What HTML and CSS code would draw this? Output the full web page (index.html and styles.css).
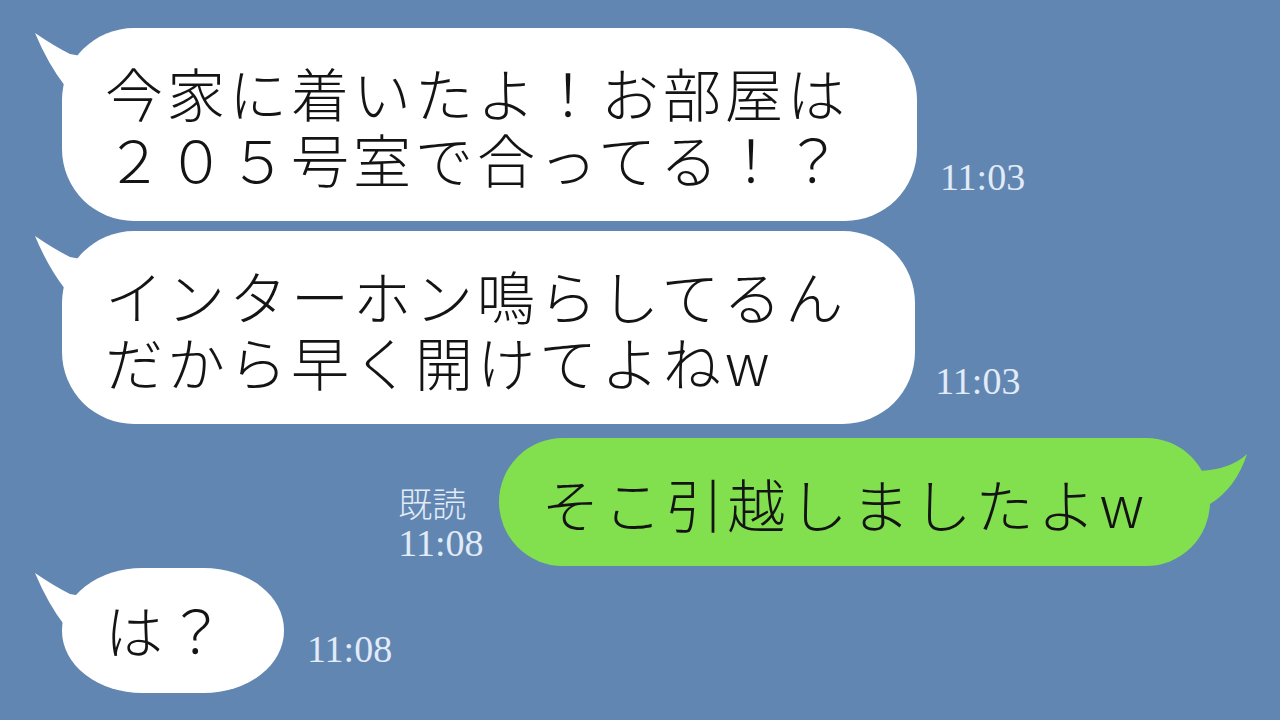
FILE: index.html
```html
<!DOCTYPE html>
<html lang="ja">
<head>
  <meta charset="UTF-8" />
  <meta name="viewport" content="width=device-width, initial-scale=1.0"/>
  <title>トーク</title>
  <link rel="stylesheet" href="styles.css">
</head>
<body>
  <div id="chat">
    <div class="row row-first">
      <div class="bubble in">
        <svg class="tail" viewBox="-30 0 45 65"><path d="M-27,5 Q-8,18 8,26 L30,30 L30,58 L3,58 Q-14,36 -27,5 Z"/></svg>
        <p>今家に着いたよ！お部屋は<br>２０５号室で合ってる！？</p>
      </div>
      <div class="time">11:03</div>
    </div>

    <div class="row row-second">
      <div class="bubble in">
        <svg class="tail" viewBox="-30 0 45 65"><path d="M-27,5 Q-8,18 8,26 L30,30 L30,58 L3,58 Q-14,36 -27,5 Z"/></svg>
        <p>インターホン鳴らしてるん<br>だから早く開けてよねw</p>
      </div>
      <div class="time">11:03</div>
    </div>

    <div class="row row-mine">
      <div class="status">
        <div class="read">既読</div>
        <div class="time">11:08</div>
      </div>
      <div class="bubble out">
        <svg class="tail" viewBox="-25 0 65 70"><path d="M37,16 Q20,32 -12,33 L-20,50 L0,66 Q26,50 37,16 Z"/></svg>
        <p>そこ引越しましたよw</p>
      </div>
    </div>

    <div class="row row-last">
      <div class="bubble in short">
        <svg class="tail" viewBox="-30 0 45 65"><path d="M-27,5 Q-8,18 8,26 L30,30 L30,58 L3,58 Q-14,36 -27,5 Z"/></svg>
        <p>は？</p>
      </div>
      <div class="time">11:08</div>
    </div>
  </div>
</body>
</html>
```

FILE: styles.css
```css
body {
  margin: 0;
  width: 1280px;
  height: 720px;
  overflow: hidden;
  background: #6186b1;
  font-family: "Noto Sans CJK JP", sans-serif;
}

#chat {
  display: flex;
  flex-direction: column;
  padding-top: 28px;
}

.row {
  display: flex;
  align-items: flex-end;
  padding-left: 62px;
}

.row-second {
  margin-top: 10px;
}

.row-mine {
  margin-top: 14px;
  justify-content: flex-end;
  padding-right: 70px;
}

.row-last {
  margin-top: 2px;
}

.bubble {
  position: relative;
  background: #fff;
  border-radius: 72px;
  padding: 31px 68px 30px 43px;
}

.bubble p {
  position: relative;
  margin: 0;
  font-size: 58px;
  font-weight: 300;
  line-height: 66px;
  letter-spacing: 4px;
  color: #141414;
  white-space: nowrap;
}

.bubble.out {
  background: #82e04f;
  border-radius: 64px;
  padding: 32px 62px 30px 43px;
}

.bubble.short {
  border-radius: 80px / 62px;
  padding: 28px 55px 31px 43px;
}

.tail {
  position: absolute;
  left: -30px;
  top: 0;
  width: 45px;
  height: 65px;
  overflow: visible;
}

.tail path {
  fill: #fff;
}

.out .tail {
  left: auto;
  right: -40px;
  width: 65px;
  height: 70px;
}

.out .tail path {
  fill: #82e04f;
}

.time {
  font-family: "Liberation Serif", serif;
  font-size: 38px;
  line-height: 38px;
  color: #e2ebf8;
  margin: 0 0 25px 23px;
}

.row-second .time {
  margin-left: 20px;
  margin-bottom: 24px;
}

.status {
  display: flex;
  flex-direction: column;
  margin: 0 15px 4px 0;
}

.read {
  font-family: "Noto Sans CJK JP", serif;
  font-size: 34px;
  font-weight: 300;
  line-height: 42px;
  color: #e2ebf8;
}

.status .time {
  margin: 0;
}
```
